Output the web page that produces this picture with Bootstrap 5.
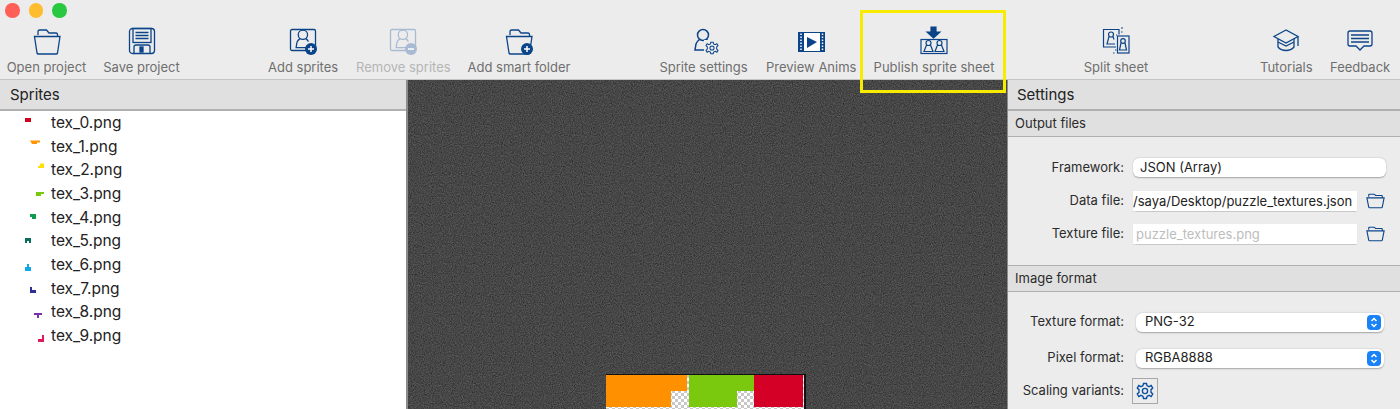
<!DOCTYPE html>
<html lang="en">
<head>
  <meta charset="UTF-8">
  <meta name="viewport" content="width=device-width, initial-scale=1">
  <title>Sprite sheet tool</title>
  <link href="https://cdn.jsdelivr.net/npm/bootstrap@5.3.0/dist/css/bootstrap.min.css" rel="stylesheet">
  <style>
    body { height: 409px; overflow: hidden; background: #ececec; font-family: Inter, "Liberation Sans", sans-serif; color: #2b2b2b; }
    svg { display: block; }
    .titlebar { height: 22px; padding: 3px 0 0 5px; gap: 9px; }
    .dot { width: 14.500px; height: 14.500px; border-radius: 50%; }
    .dot-r { background: #ff5f57; }
    .dot-y { background: #febc2e; }
    .dot-g { background: #28c840; }
    .toolbar { height: 58px; padding-left: 6px; border-bottom: 1px solid #c4c4c4; }
    .tool { font-size: 13px; line-height: 16px; color: #6f6f6f; white-space: nowrap; padding-top: 4px; width: 81px; }
    .tool svg { height: 30px; width: 30px; margin-bottom: 3px; }
    .tool-off { color: #b5b5b5; }
    .tw-save { width: 77px; margin-left: 16px; }
    .tw-add { width: 70px; margin-left: 88px; }
    .tw-rem { width: 94px; margin-left: 18px; }
    .tw-smart { width: 104px; margin-left: 17px; }
    .tw-sset { width: 91px; margin-left: 87px; }
    .tw-prev { width: 90px; margin-left: 17px; }
    .tw-pub { width: 122px; margin-left: 17px; }
    .tw-split { width: 66px; margin-left: 88px; }
    .tw-tut { width: 52px; margin-left: 111px; }
    .tw-fb { width: 60px; margin-left: 18px; }
    .hilite { position: absolute; left: 860px; top: 10px; width: 146px; height: 83px; border: 3px solid #f7ec00; z-index: 5; }
    .main-area { height: 329px; }
    .pane-left { width: 406px; background: #fff; }
    .sep-left { width: 2px; background: #8c8c8c; }
    .pane-head { height: 31px; background: #e0e0e0; border-bottom: 2px solid #b0b0b0; font-size: 15px; line-height: 29px; padding-left: 10px; color: #222; }
    .pane-right .pane-head { padding-left: 9px; }
    .sprite-row { height: 23.670px; font-size: 15.500px; line-height: 23.670px; color: #222; padding-left: 24px; gap: 7px; }
    .sprite-row svg { width: 20px; height: 16px; }
    .stage { width: 599px; position: relative; overflow: hidden; background-color: #565656; }
    .stage-grain { position: absolute; inset: 0; width: 100%; height: 100%; }
    .sheet { position: absolute; left: 198px; top: 294px; width: 200px; height: 35px; border-top: 1px solid #111; border-right: 2px solid #111;
      background-color: #fff; background-image: conic-gradient(#c8c8c8 25%, #fff 0 50%, #c8c8c8 0 75%, #fff 0); background-size: 6px 6px; }
    .sheet svg { width: 198px; height: 33px; }
    .pane-right { width: 393px; border-left: 1px solid #8c8c8c; background: #ececec; }
    .sub-head { height: 26px; background: #e0e0e0; border-bottom: 1px solid #b0b0b0; font-size: 13px; line-height: 25px; padding-left: 7px; color: #2b2b2b; }
    .sub-head-mid { border-top: 1px solid #b0b0b0; height: 27px; }
    .form-block { height: 128px; padding-top: 14px; }
    .form-block2 { padding-top: 12px; }
    .fld-row { height: 33px; font-size: 13px; }
    .fld-row2 { height: 36px; }
    .fld-row3 { height: 30px; }
    .fld-lab { width: 116px; text-align: right; color: #2b2b2b; margin-right: 9px; flex: none; }
    .form-control.fld-pop { width: 253px; height: 19px; min-height: 0; padding: 0 7px; border: 0; border-radius: 6px; font-size: 13px; color: #222; box-shadow: 0 .5px 1.5px rgba(0,0,0,.3); }
    .form-control.fld-txt { width: 224px; height: 20px; min-height: 0; padding: 0; border: 0; border-radius: 0; font-size: 13px; color: #222; box-shadow: 0 .5px 1px rgba(0,0,0,.15); background: #fff; }
    .form-control.fld-off { padding-left: 3px; color: #bdbdbd; }
    .form-control.fld-off::placeholder { color: #bdbdbd; }
    .folder-mini { width: 19px; height: 16px; margin-left: 9px; }
    .pop-wrap { position: relative; margin-left: 3px; }
    .form-control.fld-sel { width: 248px; height: 19px; min-height: 0; padding: 0 9px; border: 0; border-radius: 6px; font-size: 13px; color: #222; box-shadow: 0 .5px 1.5px rgba(0,0,0,.3); }
    .pop-arrow { position: absolute; right: 3px; top: 2px; width: 14px; height: 15px; border-radius: 4px; background: #1a82f7; }
    .gear-btn { width: 26px; height: 26px; border: 1px solid #a8a8a8; padding: 3px; margin-left: -1px; }
    .gear-btn svg { width: 18px; height: 18px; }
  </style>
</head>
<body>
  <svg width="0" height="0" class="position-absolute">
    <defs>
      <symbol id="ic-folder" viewBox="0 0 30 30">
        <path d="M6 9V5.500q0-1.500 1.500-1.500h7l2.500 3h7q1.500 0 1.500 1.500V10M2.500 10.500H28L25.500 27q-.2 1-1.500 1H6.500q-1.300 0-1.500-1z" fill="none" stroke="currentColor" stroke-width="1.300"/>
      </symbol>
      <symbol id="ic-person" viewBox="0 0 30 30">
        <circle cx="14" cy="8" r="5.500" fill="none" stroke="currentColor" stroke-width="1.500"/>
        <path d="M10.500 12.500c-2 1.500-3 2.500-3.500 4.500L6 23h16" fill="none" stroke="currentColor" stroke-width="1.500"/>
        <path d="M17.500 12.500c2 1.500 2.500 2 3 3.500" fill="none" stroke="currentColor" stroke-width="1.500"/>
      </symbol>
      <symbol id="ic-gear" viewBox="0 0 24 24">
        <circle cx="12" cy="12" r="3.500" fill="none" stroke="currentColor" stroke-width="1.800"/>
        <path d="M10 2h4l.8 3 2.700 1.200 2.800-1.500 2 3.400-2.300 2.100v3.600l2.300 2.100-2 3.400-2.800-1.500-2.700 1.200-.8 3h-4l-.8-3-2.700-1.200-2.800 1.500-2-3.400 2.300-2.100v-3.600L1.700 8.100l2-3.400 2.800 1.500L9.200 5z" fill="none" stroke="currentColor" stroke-width="1.800"/>
      </symbol>
      <filter id="grain" x="0" y="0" width="100%" height="100%">
        <feTurbulence type="fractalNoise" baseFrequency="0.9" numOctaves="2" seed="4"/>
        <feColorMatrix type="matrix" values="0 0 0 0 0  0 0 0 0 0  0 0 0 0 0  .6 .6 0 0 -.42"/>
      </filter>
    </defs>
  </svg>

  <div class="d-flex titlebar">
    <span class="dot dot-r"></span><span class="dot dot-y"></span><span class="dot dot-g"></span>
  </div>

  <div class="d-flex toolbar">
    <div class="tool text-center">
      <svg class="mx-auto" viewBox="0 0 30 30" color="#0b4488"><use href="#ic-folder"/></svg>
      Open project
    </div>
    <div class="tool tw-save text-center">
      <svg class="mx-auto" viewBox="0 0 30 30" fill="none" stroke="#0b4488" stroke-width="1.300"><rect x="2.500" y="2.500" width="25" height="25" rx="3"/><rect x="6" y="2.500" width="18" height="14"/><path d="M8.500 6.500h13M8.500 9.500h13M8.500 12.500h13M7 27v-6q0-2 2-2h12q2 0 2 2v6"/><rect x="13" y="21" width="3" height="5" fill="#0b4488"/></svg>
      Save project
    </div>
    <div class="tool tw-add text-center">
      <svg class="mx-auto" viewBox="0 0 30 30"><rect x="2.500" y="3.500" width="25" height="21" rx="1.500" fill="none" stroke="#0b4488" stroke-width="1.300"/><g transform="translate(3 2) scale(.85)" color="#0b4488"><use href="#ic-person" width="30" height="30"/></g><circle cx="23" cy="23" r="6" fill="#0b4488"/><path d="M20 23h6M23 20v6" stroke="#fff" stroke-width="1.500"/></svg>
      Add sprites
    </div>
    <div class="tool tw-rem tool-off text-center">
      <svg class="mx-auto" viewBox="0 0 30 30"><rect x="2.500" y="3.500" width="25" height="21" rx="1.500" fill="none" stroke="#a9bbd3" stroke-width="1.300"/><g transform="translate(3 2) scale(.85)" color="#a9bbd3"><use href="#ic-person" width="30" height="30"/></g><circle cx="23" cy="23" r="6" fill="#a9bbd3"/><path d="M20 23h6" stroke="#fff" stroke-width="1.500"/></svg>
      Remove sprites
    </div>
    <div class="tool tw-smart text-center">
      <svg class="mx-auto" viewBox="0 0 30 30" color="#0b4488"><use href="#ic-folder"/><circle cx="23" cy="23" r="6" fill="#0b4488"/><path d="M20 23h6M23 20v6" stroke="#fff" stroke-width="1.500"/></svg>
      Add smart folder
    </div>
    <div class="tool tw-sset text-center">
      <svg class="mx-auto" viewBox="0 0 30 30" color="#0b4488"><g transform="translate(0 1)"><use href="#ic-person" width="30" height="30"/></g><rect x="15" y="14" width="15" height="15" fill="#ececec"/><use href="#ic-gear" x="16" y="15" width="14" height="14"/></svg>
      Sprite settings
    </div>
    <div class="tool tw-prev text-center">
      <svg class="mx-auto" viewBox="0 0 30 30"><rect x="2" y="6" width="27" height="20" fill="#0b4488"/><rect x="8" y="7" width="16" height="18" fill="#fff"/><path d="M5 7.500v17M26.500 7.500v17" stroke="#fff" stroke-width="1.500" stroke-dasharray="1.500 1.500"/><path d="M11 11l10 5-10 6z" fill="#0b4488"/></svg>
      Preview Anims
    </div>
    <div class="tool tw-pub text-center">
      <svg class="mx-auto" viewBox="0 0 30 30" fill="none" stroke="#0b4488" stroke-width="1.200"><path d="M12 1h5v5h4l-6.500 6L8 6h4z" fill="#0b4488"/><rect x="2" y="13.500" width="26" height="14"/><circle cx="9.500" cy="17" r="2.500"/><path d="M7.500 19l-2.500 6.500h9L11.500 19"/><circle cx="20.500" cy="17" r="2.500"/><path d="M18.500 19L16 25.500h9L22.500 19"/></svg>
      Publish sprite sheet
    </div>
    <div class="tool tw-split text-center">
      <svg class="mx-auto" viewBox="0 0 30 30" fill="none" stroke="#0b4488" stroke-width="1.200"><path d="M15 21H2.500V3.500h15.500v5"/><circle cx="10" cy="8.500" r="2.500"/><path d="M8 10.500l-2 7.500h8"/><path d="M12 10.500l1 3"/><rect x="16.500" y="10" width="11.500" height="17" fill="#ececec"/><circle cx="22" cy="15" r="2.300"/><path d="M20 17l-1.500 7h7L24 17"/><path d="M20 2h2M20 6h1.500M15 9h1M14 24h1.500M12 27h1.500" stroke-width="1"/></svg>
      Split sheet
    </div>
    <div class="tool tw-tut text-center">
      <svg class="mx-auto" viewBox="0 0 30 30" fill="none" stroke="#0b4488" stroke-width="1.300"><path d="M15 4L3 10.500 15 17l12-6.500z"/><path d="M7 13v8q3 3.500 8 3.500t8-3.500v-8"/><path d="M7 16l8 4 8-4"/><path d="M27 11v9"/></svg>
      Tutorials
    </div>
    <div class="tool tw-fb text-center">
      <svg class="mx-auto" viewBox="0 0 30 30" fill="none" stroke="#0b4488" stroke-width="1.300"><path d="M5 5h20q2 0 2 2v11q0 2-2 2h-6l-4 4-4-4H5q-2 0-2-2V7q0-2 2-2z"/><path d="M6 9h18M6 12.500h18M6 16h18"/></svg>
      Feedback
    </div>
  </div>
  <div class="hilite"></div>

  <div class="d-flex main-area">
    <div class="pane-left">
      <div class="pane-head">Sprites</div>
      <div class="d-flex flex-column">
        <div class="d-flex align-items-center sprite-row"><svg viewBox="0 0 20 16"><path d="M1 3h6v4H1z" fill="#d0021b"/></svg>tex_0.png</div>
        <div class="d-flex align-items-center sprite-row"><svg viewBox="0 0 20 16"><path d="M6 2.500h10v2h-3v1.500H8z" fill="#ff9500"/></svg>tex_1.png</div>
        <div class="d-flex align-items-center sprite-row"><svg viewBox="0 0 20 16"><path d="M16 1.500h4V6h-6V4h2z" fill="#ffe100"/></svg>tex_2.png</div>
        <div class="d-flex align-items-center sprite-row"><svg viewBox="0 0 20 16"><path d="M12 6h8v2h-3v2h-5z" fill="#7ac90e"/></svg>tex_3.png</div>
        <div class="d-flex align-items-center sprite-row"><svg viewBox="0 0 20 16"><path d="M6 5h6v5H8V8H6z" fill="#0f9b4d"/></svg>tex_4.png</div>
        <div class="d-flex align-items-center sprite-row"><svg viewBox="0 0 20 16"><path d="M1 5h6v5H5V8H3v2H1z" fill="#0b6e5a"/></svg>tex_5.png</div>
        <div class="d-flex align-items-center sprite-row"><svg viewBox="0 0 20 16"><path d="M3 7h2v3h2v4H1v-4h2z" fill="#12a7e8"/></svg>tex_6.png</div>
        <div class="d-flex align-items-center sprite-row"><svg viewBox="0 0 20 16"><path d="M6 7h2v3h4v3H6z" fill="#2b2f96"/></svg>tex_7.png</div>
        <div class="d-flex align-items-center sprite-row"><svg viewBox="0 0 20 16"><path d="M10 9h8v2h-3v3h-2v-3h-3z" fill="#7b2fa8"/></svg>tex_8.png</div>
        <div class="d-flex align-items-center sprite-row"><svg viewBox="0 0 20 16"><path d="M18 7h2v7h-6v-3h4z" fill="#e0185e"/></svg>tex_9.png</div>
      </div>
    </div>
    <div class="sep-left"></div>
    <div class="stage">
      <svg class="stage-grain"><rect width="100%" height="100%" filter="url(#grain)"/></svg>
      <div class="sheet">
        <svg viewBox="0 0 198 33">
          <path d="M0 0h81v16H65v16H0z" fill="#ff9000"/>
          <path d="M83 0h65v16h-17v16H83z" fill="#7ac90e"/>
          <path d="M148 0h49v32h-49z" fill="#d50025"/>
        </svg>
      </div>
    </div>
    <div class="pane-right">
      <div class="pane-head">Settings</div>
      <div class="sub-head">Output files</div>
      <div class="form-block">
        <div class="d-flex align-items-center fld-row"><span class="fld-lab">Framework:</span><input class="form-control fld-pop" value="JSON (Array)" readonly></div>
        <div class="d-flex align-items-center fld-row"><span class="fld-lab">Data file:</span><input class="form-control fld-txt" value="/saya/Desktop/puzzle_textures.json" readonly><svg class="folder-mini" viewBox="0 0 30 26" color="#0b4488"><path d="M4 6V3q0-1 1-1h8l2 2h10q1 0 1 1v2M1 8h28l-3 15q-.2 1-1.500 1h-19q-1.300 0-1.500-1z" fill="none" stroke="currentColor" stroke-width="1.800"/></svg></div>
        <div class="d-flex align-items-center fld-row"><span class="fld-lab">Texture file:</span><input class="form-control fld-txt fld-off" placeholder="puzzle_textures.png" readonly><svg class="folder-mini" viewBox="0 0 30 26" color="#0b4488"><path d="M4 6V3q0-1 1-1h8l2 2h10q1 0 1 1v2M1 8h28l-3 15q-.2 1-1.500 1h-19q-1.300 0-1.500-1z" fill="none" stroke="currentColor" stroke-width="1.800"/></svg></div>
      </div>
      <div class="sub-head sub-head-mid">Image format</div>
      <div class="form-block2">
        <div class="d-flex align-items-center fld-row fld-row2"><span class="fld-lab">Texture format:</span><div class="pop-wrap"><input class="form-control fld-sel" value="PNG-32" readonly><span class="pop-arrow"><svg viewBox="0 0 14 15" fill="none" stroke="#fff" stroke-width="1.500"><path d="M4.500 6L7 3.500 9.500 6M4.500 9L7 11.500 9.500 9"/></svg></span></div></div>
        <div class="d-flex align-items-center fld-row fld-row2"><span class="fld-lab">Pixel format:</span><div class="pop-wrap"><input class="form-control fld-sel" value="RGBA8888" readonly><span class="pop-arrow"><svg viewBox="0 0 14 15" fill="none" stroke="#fff" stroke-width="1.500"><path d="M4.500 6L7 3.500 9.500 6M4.500 9L7 11.500 9.500 9"/></svg></span></div></div>
        <div class="d-flex align-items-center fld-row fld-row3"><span class="fld-lab">Scaling variants:</span><div class="gear-btn"><svg viewBox="0 0 24 24" color="#0b4f9c"><use href="#ic-gear"/></svg></div></div>
      </div>
    </div>
  </div>
  <script src="https://cdn.jsdelivr.net/npm/bootstrap@5.3.0/dist/js/bootstrap.bundle.min.js"></script>
</body>
</html>
